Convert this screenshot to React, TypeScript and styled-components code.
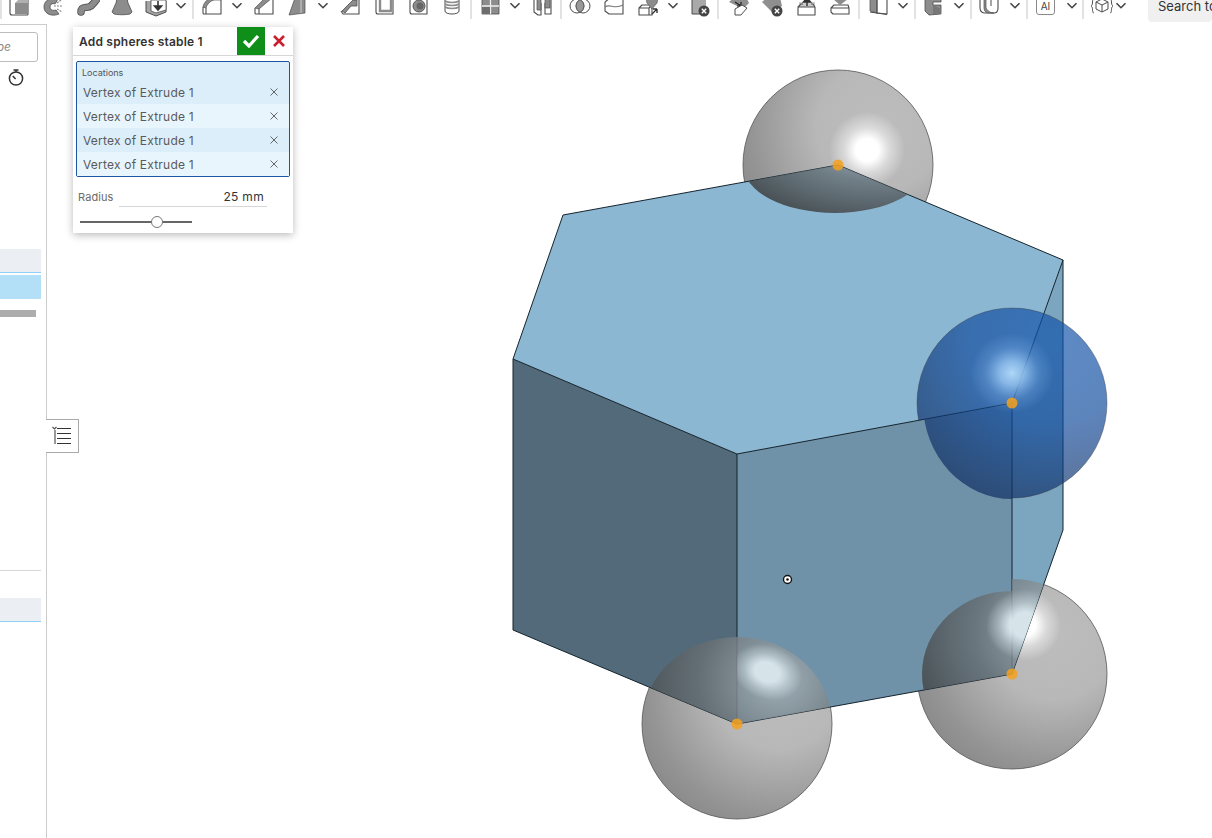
import React from "react";
import styled, { createGlobalStyle } from "styled-components";

const Global = createGlobalStyle`
  html, body { margin: 0; padding: 0; background: #fff; overflow: hidden; }
  body { font-family: Inter, "Noto Sans", "Liberation Sans", sans-serif; color: #333; }
  svg { display: block; }
`;

const Page = styled.div`
  width: 1212px;
  height: 838px;
  display: flex;
  flex-direction: column;
  overflow: hidden;
  position: relative;
`;

/* ---------- toolbar ---------- */
const Toolbar = styled.header`
  height: 24px;
  flex: none;
  display: flex;
  align-items: flex-start;
  background: #fff;
  overflow: hidden;
`;
const Slot = styled.div<{ $ml: number }>`
  flex: none;
  margin-left: ${(p) => p.$ml}px;
  width: 24px;
  height: 20px;
  display: flex;
`;
const ChevronSlot = styled.div<{ $ml: number }>`
  flex: none;
  margin-left: ${(p) => p.$ml}px;
  width: 12px;
  height: 12px;
`;
const Sep = styled.div<{ $ml: number }>`
  flex: none;
  margin-left: ${(p) => p.$ml}px;
  width: 2px;
  height: 19px;
  background: #e2e2e2;
`;
const AiBadge = styled.div`
  margin: -3px 0 0 3px;
  width: 19px;
  height: 18px;
  border: 1px solid #8a8a8a;
  border-radius: 3px;
  box-sizing: border-box;
  display: flex;
  align-items: center;
  justify-content: center;
  font-size: 10px;
  color: #444;
`;
const SearchBox = styled.div<{ $ml: number }>`
  flex: none;
  margin-left: ${(p) => p.$ml}px;
  width: 64px;
  height: 22px;
  box-sizing: border-box;
  background: #f0f0f0;
  border-radius: 0 0 4px 4px;
  padding: 0 0 0 10px;
  font-size: 13px;
  line-height: 13px;
  color: #333;
  white-space: nowrap;
  overflow: hidden;
`;

const S = "#4d4d4d";
const G = "#8c8c8c";
const base = { fill: "none", stroke: S, strokeWidth: 1.1, strokeLinejoin: "round" as const };

const icons: Record<string, React.ReactNode> = {
  extrude: (
    <>
      <path {...base} d="M3 -2V13a2 2 0 0 0 2 2H20a1 1 0 0 0 1-1V-2" />
      <rect x="8" y="3" width="13" height="11" fill={G} />
      <path d="M8 3l3-3H21V3Z" fill="#b0b0b0" />
    </>
  ),
  revolve: (
    <>
      <path d="M17 -1C10-3 3 0 3 7s8 10 15 7l-3-4c-3 1-6 0-6-3s3-4 5-3Z" fill={G} stroke={S} strokeWidth="0.8" />
      <path d="M13 6h9M16 3l4-3M16 9l5 3" stroke="#888" strokeWidth="1.2" strokeDasharray="2 1" fill="none" />
    </>
  ),
  sweep: (
    <>
      <path d="M5 12C5 5 11 9 15 6 17 4 19 2 21 -1" fill="none" stroke={S} strokeWidth="7.5" strokeLinecap="round" />
      <path d="M5 12C5 5 11 9 15 6 17 4 19 2 21 -1" fill="none" stroke={G} strokeWidth="5.8" strokeLinecap="round" />
    </>
  ),
  loft: <path d="M7 -2H17L18 3 22 12 20 14C15 15 9 15 4 14L2 12 6 3Z" fill={G} stroke={S} strokeWidth="0.8" />,
  thicken: (
    <>
      <path d="M2 1V12L12 16 22 12V1" fill="#a5a5a5" stroke={S} strokeWidth="1" />
      <path d="M7 0V11L12 13 22 10V0Z" fill="#fff" stroke={S} strokeWidth="0.8" />
      <path d="M14 1V8M10.5 6 14 10 17.5 6Z" fill="#333" stroke="#333" strokeWidth="1.6" />
    </>
  ),
  fillet: (
    <>
      <path {...base} d="M3 7V13a1 1 0 0 0 1 1H21V-2" />
      <path d="M3 7C4 2 8 -2 14 -3H21V0H14C10 1 7 4 6 8Z" fill={G} stroke={S} strokeWidth="0.7" />
      <path {...base} d="M6 8V14" />
    </>
  ),
  chamfer: (
    <>
      <path {...base} d="M3 8V13a1 1 0 0 0 1 1H21V-2" />
      <path d="M3 8 13 -2H20L7 9Z" fill={G} stroke={S} strokeWidth="0.7" />
      <path {...base} d="M7 9V14" />
    </>
  ),
  draft: (
    <>
      <path d="M10 -2H20V13L4 15Z" fill={G} stroke={S} strokeWidth="0.7" />
      <path d="M16 -2V13" stroke="#ccc" strokeWidth="1" />
    </>
  ),
  rib: (
    <>
      <path {...base} d="M21 -1V14H5L3 11" />
      <path d="M4 11 15 0H19V6L13 6 7 13Z" fill={G} stroke={S} strokeWidth="0.8" />
    </>
  ),
  shell: (
    <>
      <path {...base} d="M4 -2V12a2 2 0 0 0 2 2H21V-2" />
      <path d="M8 -2H19V11H8Z" fill="none" stroke={G} strokeWidth="2.4" />
    </>
  ),
  hole: (
    <>
      <path {...base} d="M4 -2V12a2 2 0 0 0 2 2H21V-2" />
      <circle cx="13" cy="6" r="6" fill={G} stroke={S} strokeWidth="0.9" />
      <circle cx="14" cy="6" r="3.5" fill="#666" />
    </>
  ),
  thread: (
    <>
      <path d="M5 -2H19V11C19 15 5 15 5 11Z" fill="#fff" stroke={S} strokeWidth="1" />
      <path d="M5 1C8 3 16 3 19 1M5 4C8 6 16 6 19 4M5 7C8 9 16 9 19 7" stroke={G} strokeWidth="1.6" fill="none" />
    </>
  ),
  pattern: (
    <>
      <path d="M4 -2H21V14H4Z" fill={G} stroke={S} strokeWidth="0.8" />
      <path d="M12.5 -2V14M4 6H21" stroke="#eee" strokeWidth="1.3" />
      <path d="M4 7H12V14H4Z" fill="#6e6e6e" />
    </>
  ),
  mirror: (
    <>
      <path {...base} d="M4 -1V12L8 15H11V3M21 -1V14H15V3" />
      <path d="M7 -1H11V10H7ZM15 -1H20V8H15Z" fill={G} stroke={S} strokeWidth="0.7" />
    </>
  ),
  boolean: (
    <>
      <circle cx="9" cy="6" r="7" fill="#fff" stroke={S} strokeWidth="1" />
      <circle cx="15" cy="6" r="7" fill="none" stroke={S} strokeWidth="1" />
      <path d="M12 -0.3a7 7 0 0 1 0 12.6a7 7 0 0 1 0-12.6Z" fill="#9a9a9a" stroke={S} strokeWidth="0.7" />
    </>
  ),
  split: (
    <>
      <path {...base} d="M3 2V11L7 14H21V3" />
      <path {...base} d="M3 2L8 -2H21V3" />
      <path d="M3 7C8 3 12 10 21 5" fill="none" stroke="#777" strokeWidth="1.1" />
    </>
  ),
  transform: (
    <>
      <path {...base} d="M3 8 6 5H16V15H3ZM3 8H13V15M13 8 16 5" />
      <path d="M11 3C9 -2 13 -4 16 -1 19 -4 23 -2 21 3L16 9Z" fill={G} stroke={S} strokeWidth="0.6" />
      <path d="M16 14 21 9M21 9V13M21 9H17" stroke="#333" strokeWidth="1.4" fill="none" />
    </>
  ),
  del: (
    <>
      <path d="M4 -2H18V14H4Z" fill="#a9a9a9" />
      <path d="M4 -2V14H12" fill="none" stroke={S} strokeWidth="1" />
      <circle cx="16" cy="11" r="5.5" fill="#444" />
      <path d="M13.8 8.8 18.2 13.2M18.2 8.8 13.8 13.2" stroke="#fff" strokeWidth="1.4" />
    </>
  ),
  blobEdit: (
    <>
      <path d="M3 2 9 -3H20L23 3 17 9Z" fill="#8f8f8f" />
      <path d="M9 2 15 6M15 2V6H11" stroke="#222" strokeWidth="1.2" fill="none" />
      <path d="M9 15V9L16 5 21 8 15 15Z" fill="#fff" stroke={S} strokeWidth="1" />
    </>
  ),
  blobDel: (
    <>
      <path d="M2 2 8 -3H20L22 6 12 12Z" fill="#8f8f8f" />
      <circle cx="17" cy="11" r="5.5" fill="#444" />
      <path d="M14.8 8.8 19.2 13.2M19.2 8.8 14.8 13.2" stroke="#fff" strokeWidth="1.4" />
    </>
  ),
  boxUp: (
    <>
      <path d="M4 7H20V2H4Z" fill="#999" opacity="0.5" />
      <path {...base} d="M3 7V15H20V7H3L6 4H8M20 7 18 4H16" />
      <path d="M12 -1V6M8.5 2 12 -2 15.5 2Z" fill="#333" stroke="#333" strokeWidth="1.5" />
    </>
  ),
  boxDown: (
    <>
      <path {...base} d="M3 8 6 5H20L21 8V14H5L3 12ZM3 8H21" />
      <path d="M5 -1H20L12 5Z" fill={G} />
    </>
  ),
  sheet: (
    <>
      <path d="M4 -2V11L11 13V-2Z" fill={G} stroke={S} strokeWidth="0.7" />
      <path {...base} d="M11 -2V13L21 14V-2" />
      <path d="M4 12 21 14.5" stroke={S} strokeWidth="1" />
    </>
  ),
  frame: (
    <>
      <path d="M4 -2H20V2H12V5H20V14L8 15 4 11Z" fill={G} stroke={S} strokeWidth="0.8" />
      <path d="M12 5 20 9V14H12Z" fill="#777" />
    </>
  ),
  surface: (
    <>
      <path d="M3 -2V8C3 12 6 13 8 13H17C20 13 21 10 21 8V-2" fill="none" stroke={S} strokeWidth="1.1" />
      <path d="M9 -2V7C9 9 12 13 17 13H12C9 13 7 11 7 8V-2Z" fill={G} stroke={S} strokeWidth="0.7" />
      <path d="M14 -2V6" stroke={S} strokeWidth="1" />
    </>
  ),
  cubeBraces: (
    <>
      <path d="M4 -2C2 -2 3 3 2 5 1 6 1 6 2 7 3 9 2 13 4 13M20 -2C22 -2 21 3 22 5 23 6 23 6 22 7 21 9 22 13 20 13" fill="none" stroke={S} strokeWidth="1" />
      <path d="M12 -1 18 2V9L12 12 6 9V2ZM6 2 12 5 18 2M12 5V12" fill="none" stroke={S} strokeWidth="1" strokeLinejoin="round" />
    </>
  ),
};

type Item = { t: "sep" | "chev" | "ai" | "search" | "icon"; c: number; i?: string };
const raw: Item[] = [
  { t: "sep", c: 1 },
  { t: "icon", c: 19, i: "extrude" },
  { t: "icon", c: 53, i: "revolve" },
  { t: "icon", c: 88, i: "sweep" },
  { t: "icon", c: 122, i: "loft" },
  { t: "icon", c: 156, i: "thicken" },
  { t: "chev", c: 181 },
  { t: "sep", c: 193 },
  { t: "icon", c: 212, i: "fillet" },
  { t: "chev", c: 237 },
  { t: "icon", c: 264, i: "chamfer" },
  { t: "icon", c: 297, i: "draft" },
  { t: "chev", c: 323 },
  { t: "icon", c: 350, i: "rib" },
  { t: "icon", c: 384, i: "shell" },
  { t: "icon", c: 418, i: "hole" },
  { t: "icon", c: 452, i: "thread" },
  { t: "sep", c: 471 },
  { t: "icon", c: 490, i: "pattern" },
  { t: "chev", c: 515 },
  { t: "icon", c: 542, i: "mirror" },
  { t: "sep", c: 561 },
  { t: "icon", c: 580, i: "boolean" },
  { t: "icon", c: 614, i: "split" },
  { t: "icon", c: 648, i: "transform" },
  { t: "chev", c: 673 },
  { t: "icon", c: 700, i: "del" },
  { t: "sep", c: 718 },
  { t: "icon", c: 738, i: "blobEdit" },
  { t: "icon", c: 772, i: "blobDel" },
  { t: "icon", c: 807, i: "boxUp" },
  { t: "icon", c: 840, i: "boxDown" },
  { t: "sep", c: 859 },
  { t: "icon", c: 878, i: "sheet" },
  { t: "chev", c: 903 },
  { t: "sep", c: 915 },
  { t: "icon", c: 933, i: "frame" },
  { t: "chev", c: 959 },
  { t: "sep", c: 971 },
  { t: "icon", c: 989, i: "surface" },
  { t: "chev", c: 1015 },
  { t: "sep", c: 1027 },
  { t: "ai", c: 1045 },
  { t: "chev", c: 1072 },
  { t: "sep", c: 1083 },
  { t: "icon", c: 1102, i: "cubeBraces" },
  { t: "chev", c: 1121 },
  { t: "search", c: 1180 },
];

const halfWidth = { sep: 1, chev: 6, ai: 12, icon: 12, search: 32 };

const ToolbarRow = () => {
  let right = 0;
  return (
    <Toolbar>
      {raw.map((it, k) => {
        const h = halfWidth[it.t];
        const ml = it.c - h - right;
        right = it.c + h;
        if (it.t === "sep") return <Sep key={k} $ml={ml} />;
        if (it.t === "search") return <SearchBox key={k} $ml={ml}>Search to</SearchBox>;
        if (it.t === "chev")
          return (
            <ChevronSlot key={k} $ml={ml}>
              <svg width="12" height="12" viewBox="0 0 12 12">
                <path d="M1.5 3.2 6 7.7 10.5 3.2" fill="none" stroke="#444" strokeWidth="1.6" />
              </svg>
            </ChevronSlot>
          );
        if (it.t === "ai")
          return (
            <Slot key={k} $ml={ml}>
              <AiBadge>AI</AiBadge>
            </Slot>
          );
        return (
          <Slot key={k} $ml={ml}>
            <svg width="24" height="20" viewBox="0 0 24 20">{icons[it.i!]}</svg>
          </Slot>
        );
      })}
    </Toolbar>
  );
};

/* ---------- main ---------- */
const Main = styled.main`
  flex: 1;
  display: flex;
  min-height: 0;
  position: relative;
`;
const Sidebar = styled.aside`
  width: 46px;
  flex: none;
  border-top: 1px solid #ccc;
  border-right: 1px solid #ccc;
  display: flex;
  flex-direction: column;
  overflow: hidden;
  background: #fff;
`;
const FilterBox = styled.div`
  margin: 7px 0 0 -40px;
  width: 78px;
  height: 30px;
  box-sizing: border-box;
  flex: none;
  border: 1px solid #bdbdbd;
  border-radius: 3px;
  font-style: italic;
  font-size: 12px;
  line-height: 28px;
  color: #8a8a8a;
  text-align: right;
  padding-right: 26px;
`;
const TimerWrap = styled.div`
  margin: 6px 0 0 7px;
  height: 20px;
  flex: none;
`;
const TreeRow = styled.div<{ $mt: number; $bg: string; $h: number; $line?: boolean }>`
  flex: none;
  width: 41px;
  box-sizing: border-box;
  margin-top: ${(p) => p.$mt}px;
  height: ${(p) => p.$h}px;
  background: ${(p) => p.$bg};
  border-bottom: ${(p) => (p.$line ? "1px solid #8fd0f5" : "none")};
`;
const Scrub = styled.div`
  flex: none;
  width: 36px;
  height: 7px;
  margin-top: 11px;
  background: #adadad;
`;
const Rule = styled.div`
  flex: none;
  width: 41px;
  height: 1px;
  margin-top: 253px;
  background: #d8d8d8;
`;
const PanelToggle = styled.div`
  position: absolute;
  left: 46px;
  top: 395px;
  width: 33px;
  height: 34px;
  box-sizing: border-box;
  background: #fff;
  border: 1px solid #aaa;
  border-left: none;
  display: flex;
  align-items: center;
  justify-content: center;
`;
const Viewport = styled.section`
  flex: 1;
  position: relative;
  min-width: 0;
  background: #fff;
`;
const Scene = styled.svg`
  width: 1165px;
  height: 814px;
`;

/* ---------- dialog ---------- */
const Dialog = styled.div`
  position: absolute;
  left: 73px;
  top: 3px;
  width: 220px;
  height: 206px;
  background: #fff;
  box-shadow: 0 2px 8px rgba(0, 0, 0, 0.28);
  display: flex;
  flex-direction: column;
`;
const DialogHead = styled.div`
  height: 28px;
  flex: none;
  display: flex;
  align-items: stretch;
  border-bottom: 1px solid #d6d6d6;
`;
const Title = styled.div`
  flex: 1;
  font-size: 12px;
  font-weight: 600;
  letter-spacing: 0.2px;
  line-height: 29px;
  padding-left: 6px;
  color: #333;
  white-space: nowrap;
`;
const OkButton = styled.div`
  width: 28px;
  background: #0f8f1a;
  display: flex;
  align-items: center;
  justify-content: center;
`;
const CancelButton = styled.div`
  width: 28px;
  display: flex;
  align-items: center;
  justify-content: center;
`;
const Locations = styled.div`
  margin: 5px 3px 0;
  height: 116px;
  box-sizing: border-box;
  border: 1px solid #1c57a5;
  border-radius: 2px;
  background: #dceefa;
  display: flex;
  flex-direction: column;
`;
const LocLabel = styled.div`
  height: 18px;
  flex: none;
  font-size: 9px;
  line-height: 21px;
  padding-left: 5px;
  color: #555;
`;
const LocRow = styled.div<{ $alt?: boolean }>`
  height: 24px;
  flex: none;
  display: flex;
  align-items: center;
  justify-content: space-between;
  padding: 0 10px 0 6px;
  font-size: 12px;
  letter-spacing: 0.2px;
  color: #5a5a5a;
  background: ${(p) => (p.$alt ? "#e9f5fc" : "#dceefa")};
`;
const RadiusRow = styled.div`
  margin: 11px 26px 0 5px;
  height: 19px;
  display: flex;
  align-items: center;
  gap: 5px;
`;
const RadiusLabel = styled.div`
  font-size: 11px;
  letter-spacing: 0.1px;
  color: #6b6b6b;
  line-height: 17px;
`;
const RadiusInput = styled.div`
  flex: 1;
  height: 19px;
  box-sizing: border-box;
  border-bottom: 1px solid #d6d6d6;
  text-align: right;
  padding-right: 3px;
  font-size: 12px;
  letter-spacing: 0.3px;
  line-height: 18px;
  color: #333;
`;
const SliderTrack = styled.div`
  position: relative;
  margin: 14px 0 0 7px;
  width: 112px;
  height: 2px;
  background: #666;
`;
const SliderThumb = styled.div`
  position: absolute;
  left: 71px;
  top: -5px;
  width: 12px;
  height: 12px;
  box-sizing: border-box;
  border-radius: 50%;
  background: #fff;
  border: 1px solid #777;
`;

const TOP = "838,165 1063,260 1012,403 737,454 513,359 563,215";
const LEFT = "513,359 737,454 737,724 513,630";
const RIGHT = "737,454 1012,403 1012,674 737,724";
const FAR = "1012,403 1063,260 1063,530 1012,674";
const SIL = "563,215 838,165 1063,260 1063,530 1012,674 737,724 513,630 513,359";

const Highlight = ({ cx, cy, rx, ry, id, rot }: { cx: number; cy: number; rx: number; ry: number; id: string; rot?: number }) => (
  <ellipse cx={cx} cy={cy} rx={rx} ry={ry} fill={`url(#${id})`} transform={rot ? `rotate(${rot} ${cx} ${cy})` : undefined} />
);

const Dot = ({ x, y }: { x: number; y: number }) => <circle cx={x} cy={y} r="5.5" fill="#f5a11c" opacity="0.85" />;

const Drawing = () => (
  <Scene viewBox="47 24 1165 814">
    <defs>
      <radialGradient id="gray" cx="0.72" cy="0.3" r="0.95">
        <stop offset="0" stopColor="#bdbdbd" />
        <stop offset="0.35" stopColor="#b8b8b8" />
        <stop offset="0.72" stopColor="#949494" />
        <stop offset="1" stopColor="#808080" />
      </radialGradient>
      <radialGradient id="bite" cx="0.72" cy="0.25" r="0.85">
        <stop offset="0" stopColor="#b0b8bc" stopOpacity="0.75" />
        <stop offset="0.5" stopColor="#686f73" stopOpacity="0.8" />
        <stop offset="1" stopColor="#3f4446" stopOpacity="0.9" />
      </radialGradient>
      <radialGradient id="white">
        <stop offset="0" stopColor="#fff" />
        <stop offset="0.3" stopColor="#fff" />
        <stop offset="0.6" stopColor="#fff" stopOpacity="0.45" />
        <stop offset="1" stopColor="#fff" stopOpacity="0" />
      </radialGradient>
      <radialGradient id="pale">
        <stop offset="0" stopColor="#d6e4ea" />
        <stop offset="0.35" stopColor="#d6e4ea" />
        <stop offset="0.65" stopColor="#d6e4ea" stopOpacity="0.45" />
        <stop offset="1" stopColor="#d6e4ea" stopOpacity="0" />
      </radialGradient>
      <radialGradient id="bluelight">
        <stop offset="0" stopColor="#b4dcfb" stopOpacity="0.95" />
        <stop offset="0.3" stopColor="#a5d2fa" stopOpacity="0.72" />
        <stop offset="0.65" stopColor="#8fc0f5" stopOpacity="0.25" />
        <stop offset="1" stopColor="#8fc0f5" stopOpacity="0" />
      </radialGradient>
      <radialGradient id="blue" gradientUnits="userSpaceOnUse" cx="1050" cy="340" r="185">
        <stop offset="0" stopColor="rgb(18,85,172)" />
        <stop offset="0.45" stopColor="rgb(18,76,158)" />
        <stop offset="1" stopColor="rgb(14,38,84)" />
      </radialGradient>
      <clipPath id="clipTop"><polygon points={TOP} /></clipPath>
      <clipPath id="clipLeft"><polygon points={LEFT} /></clipPath>
      <clipPath id="clipRight"><polygon points={RIGHT} /></clipPath>
      <clipPath id="clipFar"><polygon points={FAR} /></clipPath>
      <clipPath id="notRight"><polygon points="900,300 1120,300 1120,510 1012,510 1012,403 900,424" /></clipPath>
    </defs>

    <g stroke="#555" strokeWidth="0.8">
      <circle cx="838" cy="165" r="95" fill="url(#gray)" />
      <circle cx="737" cy="724" r="95" fill="url(#gray)" />
      <circle cx="1012" cy="674" r="95" fill="url(#gray)" />
    </g>
    <Highlight id="white" cx={867} cy={150} rx={38} ry={38} />
    <Highlight id="white" cx={1025} cy={625} rx={36} ry={36} />

    <polygon points={TOP} fill="#8cb7d2" />
    <polygon points={LEFT} fill="#526a7a" />
    <polygon points={RIGHT} fill="#6f92a9" />
    <polygon points={FAR} fill="#7ca6c0" />
    <g fill="none" stroke="#14232c" strokeWidth="1" strokeLinejoin="round">
      <polygon points={SIL} />
      <path d="M513 359 737 454 1012 403 1063 260M737 454V724M1012 403V674" />
    </g>

    <g clipPath="url(#clipTop)">
      <ellipse cx="835" cy="165" rx="92" ry="48" fill="url(#bite)" />
    </g>
    <g clipPath="url(#clipLeft)">
      <ellipse cx="737" cy="724" rx="95" ry="87" fill="url(#bite)" />
    </g>
    <g clipPath="url(#clipRight)">
      <ellipse cx="737" cy="724" rx="95" ry="87" fill="url(#bite)" />
      <ellipse cx="1012" cy="674" rx="90" ry="83" fill="url(#bite)" />
      <Highlight id="pale" cx={767} cy={672} rx={36} ry={27} rot={20} />
      <Highlight id="pale" cx={1022} cy={625} rx={36} ry={34} />
    </g>
    <g clipPath="url(#clipFar)">
      <circle cx="1012" cy="674" r="95" fill="url(#bite)" />
      <Highlight id="pale" cx={1025} cy={625} rx={36} ry={36} />
    </g>

    <g opacity="0.68" fill="url(#blue)">
      <g clipPath="url(#notRight)"><circle cx="1012" cy="403" r="95" /></g>
      <g clipPath="url(#clipRight)"><ellipse cx="1012" cy="403" rx="89" ry="96" /></g>
    </g>
    <circle cx="1012" cy="403" r="95" fill="none" stroke="#333" strokeWidth="0.6" opacity="0.6" clipPath="url(#notRight)" />
    <Highlight id="bluelight" cx={1012} cy={373} rx={42} ry={40} />

    <Dot x={838} y={165} />
    <Dot x={1012} y={403} />
    <Dot x={737} y={724} />
    <Dot x={1012} y={674} />

    <circle cx="787.5" cy="579.5" r="4" fill="#fff" stroke="#111" strokeWidth="1.4" />
    <circle cx="787.5" cy="579.5" r="1.3" fill="#111" />
  </Scene>
);

const Close = () => (
  <svg width="10" height="10" viewBox="0 0 10 10">
    <path d="M1.5 1.5 8.5 8.5M8.5 1.5 1.5 8.5" stroke="#666" strokeWidth="1" />
  </svg>
);

const rows = [false, true, false, true];

export default function App() {
  return (
    <Page>
      <Global />
      <ToolbarRow />
      <Main>
        <Sidebar>
          <FilterBox>pe</FilterBox>
          <TimerWrap>
            <svg width="18" height="20" viewBox="0 0 18 20">
              <circle cx="9" cy="10.5" r="6.6" fill="none" stroke="#333" strokeWidth="1.5" />
              <path d="M6.5 2H11.5M9 2V4M8.6 11 5.8 8" stroke="#333" strokeWidth="1.5" fill="none" />
            </svg>
          </TimerWrap>
          <TreeRow $mt={161} $bg="#ebeef3" $h={24} $line />
          <TreeRow $mt={2} $bg="#b3dff7" $h={24} />
          <Scrub />
          <Rule />
          <TreeRow $mt={27} $bg="#ebeef3" $h={24} $line />
        </Sidebar>
        <Viewport>
          <Drawing />
        </Viewport>
        <PanelToggle>
          <svg width="20" height="20" viewBox="0 0 20 20">
            <path d="M5 4H19M5 9H19M5 14H19M5 19H19" transform="translate(0,-1.5)" stroke="#333" strokeWidth="1" />
            <path d="M0.5 1 2.5 3 4.5 1" fill="none" stroke="#555" strokeWidth="1.2" />
            <rect x="2" y="4" width="2" height="14" fill="#999" />
          </svg>
        </PanelToggle>
        <Dialog>
          <DialogHead>
            <Title>Add spheres stable 1</Title>
            <OkButton>
              <svg width="18" height="14" viewBox="0 0 18 14">
                <path d="M2 7 7 12 16 2" fill="none" stroke="#fff" strokeWidth="3.2" />
              </svg>
            </OkButton>
            <CancelButton>
              <svg width="12" height="12" viewBox="0 0 12 12">
                <path d="M1 1 11 11M11 1 1 11" stroke="#c8202f" strokeWidth="2.6" />
              </svg>
            </CancelButton>
          </DialogHead>
          <Locations>
            <LocLabel>Locations</LocLabel>
            {rows.map((alt, i) => (
              <LocRow key={i} $alt={alt}>
                Vertex of Extrude 1
                <Close />
              </LocRow>
            ))}
          </Locations>
          <RadiusRow>
            <RadiusLabel>Radius</RadiusLabel>
            <RadiusInput>25 mm</RadiusInput>
          </RadiusRow>
          <SliderTrack>
            <SliderThumb />
          </SliderTrack>
        </Dialog>
      </Main>
    </Page>
  );
}
